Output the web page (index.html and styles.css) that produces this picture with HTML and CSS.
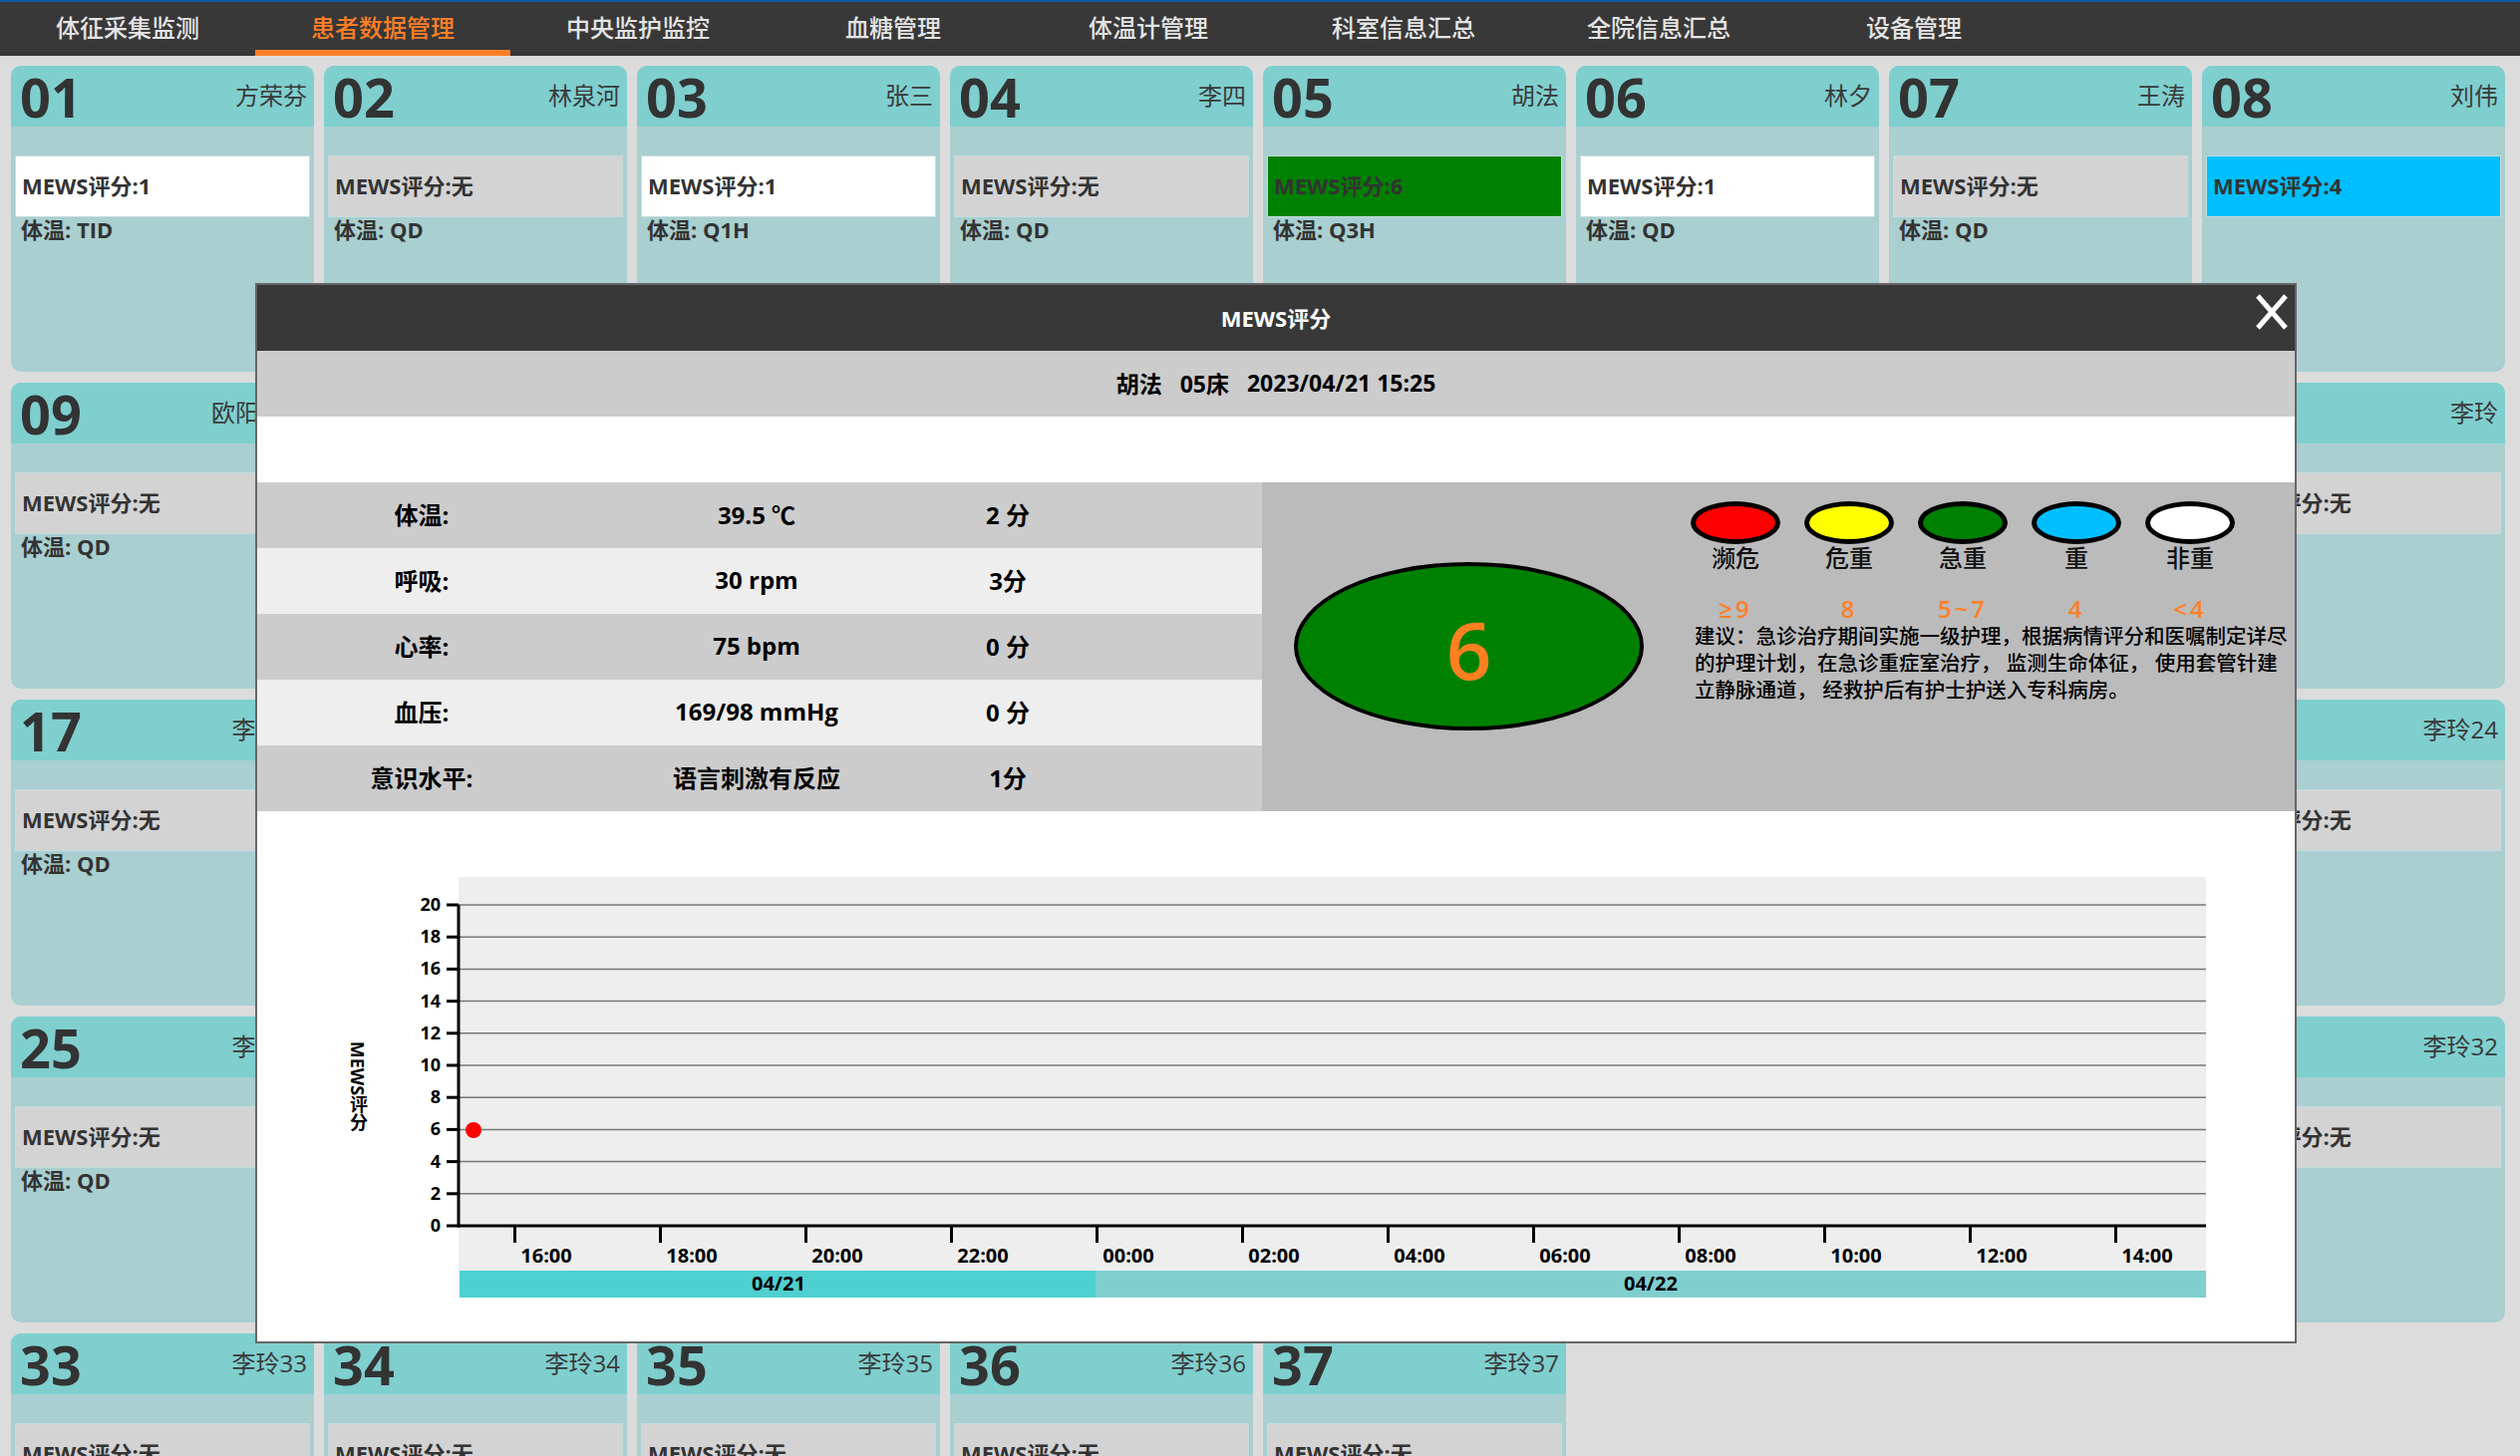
FILE: index.html
```html
<!DOCTYPE html>
<html lang="zh-CN">
<head>
<meta charset="utf-8">
<title>患者数据管理</title>
<link rel="stylesheet" href="styles.css">
</head>
<body>
<nav class="nav">
  <div class="nav-item">体征采集监测</div>
  <div class="nav-item active">患者数据管理</div>
  <div class="nav-item">中央监护监控</div>
  <div class="nav-item">血糖管理</div>
  <div class="nav-item">体温计管理</div>
  <div class="nav-item">科室信息汇总</div>
  <div class="nav-item">全院信息汇总</div>
  <div class="nav-item">设备管理</div>
</nav>

<main class="grid">
  <div class="card"><div class="card-head"><span class="bed">01</span><span class="name">方荣芬</span></div><div class="card-body"><div class="mews white">MEWS评分:1</div><div class="temp">体温: TID</div></div></div>
  <div class="card"><div class="card-head"><span class="bed">02</span><span class="name">林泉河</span></div><div class="card-body"><div class="mews">MEWS评分:无</div><div class="temp">体温: QD</div></div></div>
  <div class="card"><div class="card-head"><span class="bed">03</span><span class="name">张三</span></div><div class="card-body"><div class="mews white">MEWS评分:1</div><div class="temp">体温: Q1H</div></div></div>
  <div class="card"><div class="card-head"><span class="bed">04</span><span class="name">李四</span></div><div class="card-body"><div class="mews">MEWS评分:无</div><div class="temp">体温: QD</div></div></div>
  <div class="card"><div class="card-head"><span class="bed">05</span><span class="name">胡法</span></div><div class="card-body"><div class="mews green">MEWS评分:6</div><div class="temp">体温: Q3H</div></div></div>
  <div class="card"><div class="card-head"><span class="bed">06</span><span class="name">林夕</span></div><div class="card-body"><div class="mews white">MEWS评分:1</div><div class="temp">体温: QD</div></div></div>
  <div class="card"><div class="card-head"><span class="bed">07</span><span class="name">王涛</span></div><div class="card-body"><div class="mews">MEWS评分:无</div><div class="temp">体温: QD</div></div></div>
  <div class="card"><div class="card-head"><span class="bed">08</span><span class="name">刘伟</span></div><div class="card-body"><div class="mews blue">MEWS评分:4</div></div></div>

  <div class="card"><div class="card-head"><span class="bed">09</span><span class="name">欧阳明月</span></div><div class="card-body"><div class="mews">MEWS评分:无</div><div class="temp">体温: QD</div></div></div>
  <div class="card"><div class="card-head"><span class="bed">10</span><span class="name">李玲10</span></div><div class="card-body"><div class="mews">MEWS评分:无</div><div class="temp">体温: QD</div></div></div>
  <div class="card"><div class="card-head"><span class="bed">11</span><span class="name">李玲11</span></div><div class="card-body"><div class="mews">MEWS评分:无</div><div class="temp">体温: QD</div></div></div>
  <div class="card"><div class="card-head"><span class="bed">12</span><span class="name">李玲12</span></div><div class="card-body"><div class="mews">MEWS评分:无</div><div class="temp">体温: QD</div></div></div>
  <div class="card"><div class="card-head"><span class="bed">13</span><span class="name">李玲13</span></div><div class="card-body"><div class="mews">MEWS评分:无</div><div class="temp">体温: QD</div></div></div>
  <div class="card"><div class="card-head"><span class="bed">14</span><span class="name">李玲14</span></div><div class="card-body"><div class="mews">MEWS评分:无</div><div class="temp">体温: QD</div></div></div>
  <div class="card"><div class="card-head"><span class="bed">15</span><span class="name">李玲15</span></div><div class="card-body"><div class="mews">MEWS评分:无</div><div class="temp">体温: QD</div></div></div>
  <div class="card"><div class="card-head"><span class="bed">16</span><span class="name">李玲</span></div><div class="card-body"><div class="mews">MEWS评分:无</div></div></div>

  <div class="card"><div class="card-head"><span class="bed">17</span><span class="name">李玲17</span></div><div class="card-body"><div class="mews">MEWS评分:无</div><div class="temp">体温: QD</div></div></div>
  <div class="card"><div class="card-head"><span class="bed">18</span><span class="name">李玲18</span></div><div class="card-body"><div class="mews">MEWS评分:无</div><div class="temp">体温: QD</div></div></div>
  <div class="card"><div class="card-head"><span class="bed">19</span><span class="name">李玲19</span></div><div class="card-body"><div class="mews">MEWS评分:无</div><div class="temp">体温: QD</div></div></div>
  <div class="card"><div class="card-head"><span class="bed">20</span><span class="name">李玲20</span></div><div class="card-body"><div class="mews">MEWS评分:无</div><div class="temp">体温: QD</div></div></div>
  <div class="card"><div class="card-head"><span class="bed">21</span><span class="name">李玲21</span></div><div class="card-body"><div class="mews">MEWS评分:无</div><div class="temp">体温: QD</div></div></div>
  <div class="card"><div class="card-head"><span class="bed">22</span><span class="name">李玲22</span></div><div class="card-body"><div class="mews">MEWS评分:无</div><div class="temp">体温: QD</div></div></div>
  <div class="card"><div class="card-head"><span class="bed">23</span><span class="name">李玲23</span></div><div class="card-body"><div class="mews">MEWS评分:无</div><div class="temp">体温: QD</div></div></div>
  <div class="card"><div class="card-head"><span class="bed">24</span><span class="name">李玲24</span></div><div class="card-body"><div class="mews">MEWS评分:无</div></div></div>

  <div class="card"><div class="card-head"><span class="bed">25</span><span class="name">李玲25</span></div><div class="card-body"><div class="mews">MEWS评分:无</div><div class="temp">体温: QD</div></div></div>
  <div class="card"><div class="card-head"><span class="bed">26</span><span class="name">李玲26</span></div><div class="card-body"><div class="mews">MEWS评分:无</div><div class="temp">体温: QD</div></div></div>
  <div class="card"><div class="card-head"><span class="bed">27</span><span class="name">李玲27</span></div><div class="card-body"><div class="mews">MEWS评分:无</div><div class="temp">体温: QD</div></div></div>
  <div class="card"><div class="card-head"><span class="bed">28</span><span class="name">李玲28</span></div><div class="card-body"><div class="mews">MEWS评分:无</div><div class="temp">体温: QD</div></div></div>
  <div class="card"><div class="card-head"><span class="bed">29</span><span class="name">李玲29</span></div><div class="card-body"><div class="mews">MEWS评分:无</div><div class="temp">体温: QD</div></div></div>
  <div class="card"><div class="card-head"><span class="bed">30</span><span class="name">李玲30</span></div><div class="card-body"><div class="mews">MEWS评分:无</div><div class="temp">体温: QD</div></div></div>
  <div class="card"><div class="card-head"><span class="bed">31</span><span class="name">李玲31</span></div><div class="card-body"><div class="mews">MEWS评分:无</div><div class="temp">体温: QD</div></div></div>
  <div class="card"><div class="card-head"><span class="bed">32</span><span class="name">李玲32</span></div><div class="card-body"><div class="mews">MEWS评分:无</div></div></div>

  <div class="card"><div class="card-head"><span class="bed">33</span><span class="name">李玲33</span></div><div class="card-body"><div class="mews">MEWS评分:无</div><div class="temp">体温: QD</div></div></div>
  <div class="card"><div class="card-head"><span class="bed">34</span><span class="name">李玲34</span></div><div class="card-body"><div class="mews">MEWS评分:无</div><div class="temp">体温: QD</div></div></div>
  <div class="card"><div class="card-head"><span class="bed">35</span><span class="name">李玲35</span></div><div class="card-body"><div class="mews">MEWS评分:无</div><div class="temp">体温: QD</div></div></div>
  <div class="card"><div class="card-head"><span class="bed">36</span><span class="name">李玲36</span></div><div class="card-body"><div class="mews">MEWS评分:无</div><div class="temp">体温: QD</div></div></div>
  <div class="card"><div class="card-head"><span class="bed">37</span><span class="name">李玲37</span></div><div class="card-body"><div class="mews">MEWS评分:无</div><div class="temp">体温: QD</div></div></div>
</main>

<section class="modal">
  <header class="modal-head">
    <span>MEWS评分</span>
    <svg class="close" viewBox="0 0 34 38" width="34" height="38">
      <line x1="3" y1="3" x2="31" y2="35" stroke="#fff" stroke-width="5"/>
      <line x1="31" y1="3" x2="3" y2="35" stroke="#fff" stroke-width="5"/>
    </svg>
  </header>
  <div class="modal-sub"><span>胡法</span><span>05床</span><span>2023/04/21 15:25</span></div>
  <div class="modal-gap"></div>
  <div class="detail">
    <div class="vitals">
      <div class="vrow"><span>体温:</span><span>39.5 ℃</span><span>2 分</span></div>
      <div class="vrow alt"><span>呼吸:</span><span>30 rpm</span><span>3分</span></div>
      <div class="vrow"><span>心率:</span><span>75 bpm</span><span>0 分</span></div>
      <div class="vrow alt"><span>血压:</span><span>169/98 mmHg</span><span>0 分</span></div>
      <div class="vrow"><span>意识水平:</span><span>语言刺激有反应</span><span>1分</span></div>
    </div>
    <div class="score-panel">
      <div class="big">6</div>
      <div class="legend">
        <div class="levels">
          <div class="dot red"></div><div class="dot yellow"></div><div class="dot green"></div><div class="dot blue"></div><div class="dot white"></div>
          <div class="lvl-name">濒危</div><div class="lvl-name">危重</div><div class="lvl-name">急重</div><div class="lvl-name">重</div><div class="lvl-name">非重</div>
          <div class="lvl-range">≥9</div><div class="lvl-range">8</div><div class="lvl-range">5~7</div><div class="lvl-range">4</div><div class="lvl-range">&lt;4</div>
        </div>
        <p class="advice">建议：急诊治疗期间实施一级护理，根据病情评分和医嘱制定详尽<br>的护理计划，在急诊重症室治疗， 监测生命体征， 使用套管针建<br>立静脉通道， 经救护后有护士护送入专科病房。</p>
      </div>
    </div>
  </div>
  <div class="chart-area">
    <svg class="chart" width="2044" height="532" viewBox="0 0 2044 532">
      <rect x="202" y="66" width="1753" height="395" fill="#eeeeee"/>
      <g class="grid-lines">
        <line x1="202" x2="1955" y1="94" y2="94"/>
        <line x1="202" x2="1955" y1="126.2" y2="126.2"/>
        <line x1="202" x2="1955" y1="158.4" y2="158.4"/>
        <line x1="202" x2="1955" y1="190.6" y2="190.6"/>
        <line x1="202" x2="1955" y1="222.8" y2="222.8"/>
        <line x1="202" x2="1955" y1="255" y2="255"/>
        <line x1="202" x2="1955" y1="287.2" y2="287.2"/>
        <line x1="202" x2="1955" y1="319.4" y2="319.4"/>
        <line x1="202" x2="1955" y1="351.6" y2="351.6"/>
        <line x1="202" x2="1955" y1="383.8" y2="383.8"/>
      </g>
      <g class="ticks">
        <line x1="190" x2="202" y1="94" y2="94"/>
        <line x1="190" x2="202" y1="126.2" y2="126.2"/>
        <line x1="190" x2="202" y1="158.4" y2="158.4"/>
        <line x1="190" x2="202" y1="190.6" y2="190.6"/>
        <line x1="190" x2="202" y1="222.8" y2="222.8"/>
        <line x1="190" x2="202" y1="255" y2="255"/>
        <line x1="190" x2="202" y1="287.2" y2="287.2"/>
        <line x1="190" x2="202" y1="319.4" y2="319.4"/>
        <line x1="190" x2="202" y1="351.6" y2="351.6"/>
        <line x1="190" x2="202" y1="383.8" y2="383.8"/>
        <line x1="202" x2="202" y1="94" y2="417.5"/>
        <line x1="190" x2="1955" y1="416" y2="416"/>
        <line x1="258.5" x2="258.5" y1="416" y2="433"/>
        <line x1="404.5" x2="404.5" y1="416" y2="433"/>
        <line x1="550.5" x2="550.5" y1="416" y2="433"/>
        <line x1="696.5" x2="696.5" y1="416" y2="433"/>
        <line x1="842.5" x2="842.5" y1="416" y2="433"/>
        <line x1="988.5" x2="988.5" y1="416" y2="433"/>
        <line x1="1134.5" x2="1134.5" y1="416" y2="433"/>
        <line x1="1280.5" x2="1280.5" y1="416" y2="433"/>
        <line x1="1426.5" x2="1426.5" y1="416" y2="433"/>
        <line x1="1572.5" x2="1572.5" y1="416" y2="433"/>
        <line x1="1718.5" x2="1718.5" y1="416" y2="433"/>
        <line x1="1864.5" x2="1864.5" y1="416" y2="433"/>
      </g>
      <g class="ylab">
        <text x="184" y="100">20</text>
        <text x="184" y="132.2">18</text>
        <text x="184" y="164.4">16</text>
        <text x="184" y="196.6">14</text>
        <text x="184" y="228.8">12</text>
        <text x="184" y="261">10</text>
        <text x="184" y="293.2">8</text>
        <text x="184" y="325.4">6</text>
        <text x="184" y="357.6">4</text>
        <text x="184" y="389.8">2</text>
        <text x="184" y="422">0</text>
      </g>
      <g class="xlab">
        <text x="290" y="453">16:00</text>
        <text x="436" y="453">18:00</text>
        <text x="582" y="453">20:00</text>
        <text x="728" y="453">22:00</text>
        <text x="874" y="453">00:00</text>
        <text x="1020" y="453">02:00</text>
        <text x="1166" y="453">04:00</text>
        <text x="1312" y="453">06:00</text>
        <text x="1458" y="453">08:00</text>
        <text x="1604" y="453">10:00</text>
        <text x="1750" y="453">12:00</text>
        <text x="1896" y="453">14:00</text>
      </g>
      <circle cx="217" cy="320" r="8" fill="#ff0000"/>
      <rect x="203" y="461" width="638" height="27" fill="#4fd0d0"/>
      <rect x="841" y="461" width="1114" height="27" fill="#7fcfcf"/>
      <g class="xlab">
        <text x="523" y="481">04/21</text>
        <text x="1398" y="481">04/22</text>
      </g>
      <text class="ytitle" x="101" y="276">MEWS评分</text>
    </svg>
  </div>
</section>
</body>
</html>
```
FILE: styles.css
```css
html, body {
  margin: 0;
  height: 100%;
  overflow: hidden;
}
body {
  background: #dcdcdc;
  font-family: "Open Sans", "Noto Sans CJK SC", sans-serif;
  color: #333;
  position: relative;
}

/* top navigation */
.nav {
  height: 54px;
  border-top: 2px solid #0b5aa6;
  background: #383838;
  display: flex;
}
.nav-item {
  width: 256px;
  box-sizing: border-box;
  display: flex;
  align-items: center;
  justify-content: center;
  padding-bottom: 6px;
  color: #e4e4e4;
  font-size: 24px;
  font-weight: 500;
}
.nav-item.active {
  color: #ff7f27;
  padding-bottom: 0;
  border-bottom: 6px solid #ff7f27;
}

/* bed cards */
.grid {
  display: flex;
  flex-wrap: wrap;
  gap: 11px 10px;
  padding: 10px 0 0 11px;
}
.card {
  width: 304px;
  height: 307px;
  border-radius: 10px;
  overflow: hidden;
  background: #a9cfd0;
}
.card-head {
  height: 61px;
  background: #7fcfcf;
  display: flex;
  justify-content: space-between;
  align-items: center;
  padding: 0 7px 0 9px;
}
.bed {
  font-size: 54px;
  font-weight: 700;
  line-height: 1;
  color: #333;
}
.name {
  font-size: 24px;
  color: #3a3a3a;
  white-space: nowrap;
  padding-bottom: 5px;
}
.card-body {
  padding: 29px 4px 0;
}
.mews {
  height: 62px;
  box-sizing: border-box;
  display: flex;
  align-items: center;
  padding: 0 0 5px 6px;
  font-size: 22px;
  font-weight: 700;
  color: #333;
  background: #d3d3d3;
  border: 1px solid #c6dcdc;
}
.mews.white { background: #ffffff; }
.mews.green { background: #008000; }
.mews.blue { background: #00bfff; }
.temp {
  padding-left: 6px;
  font-size: 22px;
  font-weight: 700;
  line-height: 24px;
  color: #333;
}

/* modal */
.modal {
  position: absolute;
  left: 256px;
  top: 284px;
  width: 2048px;
  height: 1064px;
  box-sizing: border-box;
  border: 2px solid #666;
  background: #fff;
  z-index: 10;
  display: flex;
  flex-direction: column;
}
.modal-head {
  height: 66px;
  flex: none;
  box-sizing: border-box;
  padding-bottom: 3px;
  background: #383838;
  color: #fff;
  font-size: 22px;
  font-weight: 700;
  display: flex;
  align-items: center;
  justify-content: center;
  position: relative;
}
.close {
  position: absolute;
  right: 6px;
  top: 8px;
}
.modal-sub {
  height: 66px;
  flex: none;
  box-sizing: border-box;
  padding-bottom: 2px;
  background: #cccccc;
  display: flex;
  align-items: center;
  justify-content: center;
  gap: 18px;
  font-size: 23px;
  font-weight: 700;
  color: #000;
}
.modal-gap {
  height: 66px;
  flex: none;
  background: #fff;
}
.detail {
  height: 330px;
  flex: none;
  display: flex;
}
.vitals {
  width: 1008px;
  display: flex;
  flex-direction: column;
}
.vrow {
  height: 66px;
  box-sizing: border-box;
  padding-bottom: 3px;
  display: grid;
  grid-template-columns: 330px 342px 162px 1fr;
  align-items: center;
  text-align: center;
  font-size: 24px;
  font-weight: 700;
  color: #000;
  background: #cccccc;
}
.vrow.alt { background: #eeeeee; }

.score-panel {
  flex: 1;
  background: #bbbbbb;
  display: flex;
  align-items: flex-start;
}
.big {
  margin: 80px 0 0 32px;
  width: 351px;
  height: 169px;
  box-sizing: border-box;
  border: 4px solid #000;
  border-radius: 50%;
  background: #008000;
  display: flex;
  align-items: center;
  justify-content: center;
  padding-top: 4px;
  color: #ff8020;
  font-size: 80px;
  font-weight: 600;
}
.legend {
  margin: 19px 0 0 35px;
}
.levels {
  display: grid;
  grid-template-columns: repeat(5, 114px);
  justify-items: center;
}
.dot {
  width: 90px;
  height: 43px;
  box-sizing: border-box;
  border: 5px solid #000;
  border-radius: 50%;
}
.dot.red { background: #ff0000; }
.dot.yellow { background: #ffff00; }
.dot.green { background: #008000; }
.dot.blue { background: #00bfff; }
.dot.white { background: #ffffff; }
.lvl-name {
  font-size: 24px;
  line-height: 28px;
  font-weight: 500;
  color: #111;
}
.lvl-range {
  margin-top: 23px;
  font-size: 24px;
  line-height: 28px;
  letter-spacing: 3px;
  font-weight: 600;
  color: #ff7f27;
}
.advice {
  margin: 0;
  padding-left: 16px;
  font-size: 20.5px;
  line-height: 27px;
  font-weight: 500;
  color: #000;
  white-space: nowrap;
}

/* chart */
.chart-area {
  flex: 1;
  background: #fff;
}
.chart {
  display: block;
}
.grid-lines line {
  stroke: #777;
  stroke-width: 1.5;
}
.ticks line {
  stroke: #000;
  stroke-width: 3;
}
.ylab text {
  font-family: "Open Sans", sans-serif;
  font-size: 18px;
  font-weight: 700;
  text-anchor: end;
  fill: #000;
}
.xlab text {
  font-family: "Open Sans", sans-serif;
  font-size: 20px;
  font-weight: 700;
  text-anchor: middle;
  fill: #000;
}
.ytitle {
  font-family: "Open Sans", "Noto Sans CJK SC", sans-serif;
  font-size: 18px;
  font-weight: 700;
  writing-mode: vertical-rl;
  text-anchor: middle;
  fill: #000;
}
```
